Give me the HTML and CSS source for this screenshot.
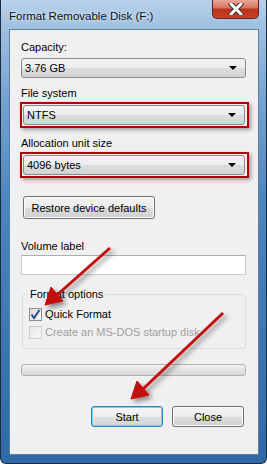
FILE: index.html
```html
<!DOCTYPE html>
<html>
  <head>
    <link rel="stylesheet" href="styles.css">
  </head>

  <body>
    <div class="window">
      <div class="titlebar">
        <p class="title">Format Removable Disk (F:)</p>
        <div class="closeBtn">
          <svg width="16" height="12" viewBox="0 0 16 12">
            <path d="M3 1 L13 11 M13 1 L3 11" stroke="#3a2a2a" stroke-width="5" stroke-linecap="round"/>
            <path d="M3 1 L13 11 M13 1 L3 11" stroke="#fff" stroke-width="3" stroke-linecap="round"/>
          </svg>
        </div>
      </div>

      <div class="client">
        <p class="label">Capacity:</p>
        <div class="combo">
          <span>3.76 GB</span>
          <span class="caret"></span>
        </div>

        <p class="label gap">File system</p>
        <div class="mark">
          <div class="combo">
            <span>NTFS</span>
            <span class="caret"></span>
          </div>
        </div>

        <p class="label gap">Allocation unit size</p>
        <div class="mark">
          <div class="combo">
            <span>4096 bytes</span>
            <span class="caret"></span>
          </div>
        </div>

        <button class="btn restore">Restore device defaults</button>

        <p class="label volume">Volume label</p>
        <div class="textbox"></div>

        <fieldset class="options">
          <legend>Format options</legend>
          <div class="check">
            <span class="box">
              <svg width="11" height="11" viewBox="0 0 11 11">
                <path d="M1.5 5.5 L4 9 L9.5 1" stroke="#2b4b8c" stroke-width="2" fill="none"/>
              </svg>
            </span>
            <span>Quick Format</span>
          </div>
          <div class="check disabled">
            <span class="box"></span>
            <span>Create an MS-DOS startup disk</span>
          </div>
        </fieldset>

        <div class="progress"></div>

        <div class="actions">
          <button class="btn default">Start</button>
          <button class="btn">Close</button>
        </div>
      </div>

      <svg class="arrows" width="267" height="464" viewBox="0 0 267 464">
        <defs>
          <filter id="shade" x="-20%" y="-20%" width="150%" height="150%">
            <feDropShadow dx="3" dy="3" stdDeviation="2.5" flood-color="#000" flood-opacity="0.45"/>
          </filter>
        </defs>
        <g filter="url(#shade)" fill="#c40d0d" stroke="#c40d0d">
          <line x1="109" y1="248" x2="56" y2="295" stroke-width="3"/>
          <polygon points="44,305 50,287 62,301" stroke-width="1"/>
          <line x1="222" y1="313" x2="142" y2="389" stroke-width="3"/>
          <polygon points="130,399 136,381 148,395" stroke-width="1"/>
        </g>
      </svg>
    </div>
  </body>
</html>
```

FILE: styles.css
```css
body {
  margin: 0;
  padding: 0;
  background: #fff;
  font-family: "Liberation Sans", Arial, sans-serif;
  font-size: 11px;
  color: #000;
}

.window {
  position: relative;
  width: 267px;
  height: 464px;
  box-sizing: border-box;
  padding: 0 7px 8px 8px;
  border: 1px solid #1a2c40;
  border-top: none;
  border-radius: 0 0 6px 6px;
  background: linear-gradient(to bottom, #b9d2ea 0, #a3c2e1 22px, #7ba6d2 90px, #4d85bd 200px, #2f6aa6 100%);
}

.titlebar {
  display: flex;
  justify-content: space-between;
  align-items: flex-start;
  height: 29px;
}

.title {
  margin: 10px 0 0 0;
  font-size: 11.5px;
  color: #111;
  text-shadow: 0 0 6px #d8e8f6, 0 0 3px #d8e8f6;
}

.closeBtn {
  width: 45px;
  height: 18px;
  display: flex;
  align-items: center;
  justify-content: center;
  border: 1px solid #5a2a26;
  border-top: none;
  border-radius: 0 0 5px 5px;
  background: linear-gradient(to bottom, #e8a79a 0, #d66f5e 45%, #b8321c 50%, #c9432a 100%);
}

.client {
  height: 426px;
  box-sizing: border-box;
  padding: 10px 12px 0 11px;
  background-color: #f0f0f0;
  border: 1px solid #5f7f9f;
}

.label {
  margin: 0 0 3px 0;
  line-height: 15px;
}

.label.gap {
  margin-top: 8px;
  margin-bottom: 1px;
}

.combo {
  display: flex;
  justify-content: space-between;
  align-items: center;
  height: 20px;
  box-sizing: border-box;
  padding: 0 8px 0 3px;
  border: 1px solid #8a8a8a;
  border-radius: 3px;
  background: linear-gradient(to bottom, #f4f4f4 0, #ececec 50%, #dedede 50%, #d2d2d2 100%);
}

.caret {
  width: 0;
  height: 0;
  border-left: 4px solid transparent;
  border-right: 4px solid transparent;
  border-top: 4px solid #000;
}

.mark {
  margin-left: -1px;
  margin-right: -3px;
  padding: 1px 2px 1px 1px;
  border: 2px solid #b5000c;
  box-shadow: 2px 2px 4px rgba(0, 0, 0, 0.35);
}

.btn {
  height: 22px;
  box-sizing: border-box;
  padding: 0;
  font-family: "Liberation Sans", Arial, sans-serif;
  font-size: 11px;
  color: #000;
  border: 1px solid #707070;
  border-radius: 3px;
  background: linear-gradient(to bottom, #f3f3f3 0, #ebebeb 50%, #dddddd 50%, #cfcfcf 100%);
  box-shadow: inset 0 0 0 1px #fbfbfb;
}

.restore {
  display: block;
  width: 132px;
  height: 23px;
  margin: 18px 0 0 2px;
}

.label.volume {
  margin-top: 20px;
  margin-bottom: 1px;
}

.textbox {
  height: 20px;
  box-sizing: border-box;
  background: #fff;
  border: 1px solid #c8ced6;
  border-top-color: #abadb3;
}

.options {
  margin: 13px 0 0 1px;
  padding: 4px 6px 4px 6px;
  height: 61px;
  box-sizing: border-box;
  border: 1px solid #d5dfe5;
  border-radius: 3px;
}

.options legend {
  padding: 0 2px;
  margin-left: -1px;
}

.check {
  display: flex;
  align-items: center;
  gap: 3px;
  height: 16px;
  margin-top: 2px;
}

.box {
  display: flex;
  align-items: center;
  justify-content: center;
  width: 13px;
  height: 13px;
  box-sizing: border-box;
  border: 1px solid #8f8f8f;
  background: linear-gradient(135deg, #dcdcdc 0, #f7f7f7 100%);
}

.check.disabled {
  color: #a0a0a0;
}

.check.disabled .box {
  border-color: #cfcfcf;
  background: linear-gradient(135deg, #e6e6e6 0, #f8f8f8 100%);
}

.progress {
  height: 12px;
  margin-top: 15px;
  box-sizing: border-box;
  border: 1px solid #b2b2b2;
  border-radius: 3px;
  background: linear-gradient(to bottom, #f3f3f3 0, #e2e2e2 50%, #d6d6d6 100%);
}

.actions {
  display: flex;
  justify-content: flex-end;
  gap: 9px;
  margin-top: 30px;
  padding-right: 2px;
}

.actions .btn {
  width: 72px;
  height: 21px;
}

.btn.default {
  border-color: #3c7fb1;
  box-shadow: inset 0 0 0 1px #6fd3f7;
  background: linear-gradient(to bottom, #f4f6f8 0, #eceef0 50%, #dde0e3 50%, #d2d6da 100%);
}

.arrows {
  position: absolute;
  left: 0;
  top: 0;
  pointer-events: none;
}
```
